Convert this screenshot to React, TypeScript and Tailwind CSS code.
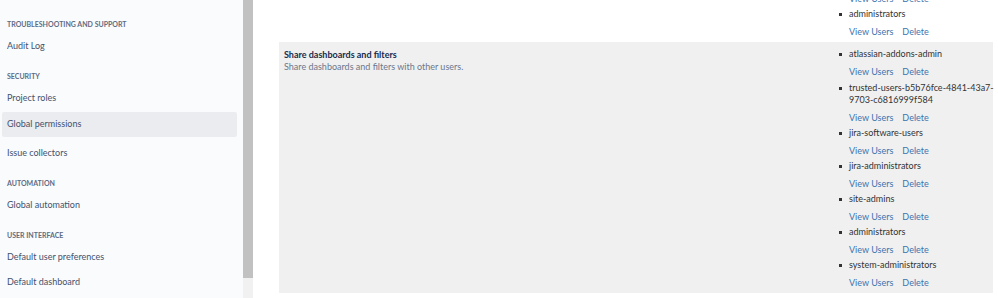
import React from 'react'

const font = { fontFamily: 'Lato, "Open Sans", sans-serif' }

type SideEntry = { kind: 'heading' | 'item'; label: string; active?: boolean; extra?: string }

const sidebar: SideEntry[] = [
  { kind: 'heading', label: 'Troubleshooting and support' },
  { kind: 'item', label: 'Audit Log' },
  { kind: 'heading', label: 'Security' },
  { kind: 'item', label: 'Project roles' },
  { kind: 'item', label: 'Global permissions', active: true, extra: 'mt-[1px]' },
  { kind: 'item', label: 'Issue collectors', extra: 'mt-[4px]' },
  { kind: 'heading', label: 'Automation' },
  { kind: 'item', label: 'Global automation' },
  { kind: 'heading', label: 'User interface' },
  { kind: 'item', label: 'Default user preferences' },
  { kind: 'item', label: 'Default dashboard' },
]

const groups = [
  'atlassian-addons-admin',
  'trusted-users-b5b76fce-4841-43a7-9703-c6816999f584',
  'jira-software-users',
  'jira-administrators',
  'site-admins',
  'administrators',
  'system-administrators',
]

function Links({ last }: { last?: boolean }) {
  return (
    <div className={`flex gap-[9px] pt-[6px] text-[#3b73af] leading-[12px] ${last ? 'pb-[4px]' : 'pb-[3px]'}`}>
      <span>View Users</span>
      <span>Delete</span>
    </div>
  )
}

// square bullet + group name + actions
function GroupItem({ name, last, className = '' }: { name: string; last?: boolean; className?: string }) {
  return (
    <li className={`flex ${className}`}>
      <div className="w-[21px] shrink-0 flex justify-end pr-[7px] pt-[5px]">
        <span className="w-[3px] h-[3px] bg-[#333333]" />
      </div>
      <div className="flex-1 leading-[12px] -mr-[5px]">
        {name}
        <Links last={last} />
      </div>
    </li>
  )
}

export default function App() {
  return (
    <div className="flex w-[998px] h-[298px] overflow-hidden bg-white" style={font}>
      {/* Sidebar */}
      <aside className="w-[243px] shrink-0 bg-[#fafbfc] pt-[15px] pl-[2px] pr-[6px]">
        {sidebar.map((e, i) =>
          e.kind === 'heading' ? (
            <div
              key={e.label}
              className={`h-[19px] flex items-center pl-[5px] text-[7px] font-bold uppercase text-[#5e6c84] ${
                i === 0 ? '' : 'mt-[8px]'
              }`}
            >
              {e.label}
            </div>
          ) : (
            <div
              key={e.label}
              className={`h-[25px] pb-[2px] flex items-center pl-[5px] rounded-[2px] text-[9px] text-[#42526e] ${
                e.active ? 'bg-[#ebecf0]' : ''
              } ${e.extra ?? ''}`}
            >
              {e.label}
            </div>
          )
        )}
      </aside>

      {/* Scrollbar */}
      <div className="w-[10px] shrink-0 flex flex-col bg-[#f1f1f1]">
        <div className="h-[278px] bg-[#c1c1c1]" />
      </div>

      {/* Main */}
      <main className="flex-1 pl-[26px] pr-[5px] text-[9px]">
        <div className="flex h-[42px] items-end">
          <div className="flex-1" />
          <div className="w-[165px] text-[#333333]">
            <div className="pl-[21px] flex gap-[9px] text-[#3b73af] leading-[12px]">
              <span>View Users</span>
              <span>Delete</span>
            </div>
            <ul className="pt-[3px]">
              <GroupItem name="administrators" last />
            </ul>
          </div>
        </div>
        <div className="flex bg-[#f0f0f0] h-[251px] pt-[5px]">
          <div className="flex-1 pl-[5px] pt-[1px]">
            <div className="font-bold text-[#172b4d] leading-[13px]">Share dashboards and filters</div>
            <div className="text-[#6b778c] leading-[12px]">Share dashboards and filters with other users.</div>
          </div>
          <ul className="w-[165px] pt-[1px] text-[#333333]">
            {groups.map((g, i) => (
              <GroupItem key={g} name={g} className={i === 0 ? 'mb-[1px]' : ''} />
            ))}
          </ul>
        </div>
      </main>
    </div>
  )
}
